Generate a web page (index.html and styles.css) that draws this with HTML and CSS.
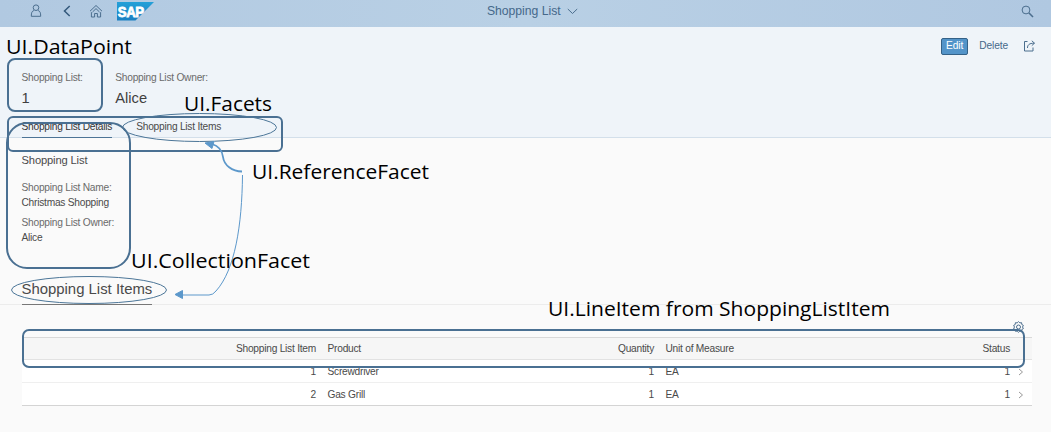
FILE: index.html
```html
<!DOCTYPE html>
<html lang="en">
<head>
<meta charset="utf-8">
<title>Shopping List</title>
<link rel="stylesheet" href="styles.css">
</head>
<body>
<div class="app">
  <header class="shell">
    <div class="shell-left">
      <svg class="icon-user" width="12" height="14" viewBox="0 0 12 14"><circle cx="6" cy="3.700" r="2.800"/><path d="M3.900 6.500C2 7.200 1.300 8.500 1.300 12.300h9.400c0-3.800-.7-5.100-2.600-5.800"/></svg>
      <svg class="icon-back" width="8" height="12" viewBox="0 0 8 12"><path d="M6.700 1 1.500 6l5.200 5"/></svg>
      <svg class="icon-home" width="14" height="14" viewBox="0 0 14 14"><path d="M1 7.200 7 1.500l6 5.700M2.400 8.200V13h3.200V9.500h2.800V13h3.200V8.200M3.500 8 7 4.600 10.500 8"/></svg>
      <svg class="logo" width="37" height="19" viewBox="0 0 37 19"><defs><linearGradient id="sap" x1="0" y1="0" x2="0" y2="1"><stop offset="0" stop-color="#24a0d8"/><stop offset="1" stop-color="#1a80c2"/></linearGradient></defs><path fill="url(#sap)" d="M0 0h37L18.500 18.500H0z"/><text x="0.800" y="15" textLength="26" lengthAdjust="spacingAndGlyphs">SAP</text></svg>
    </div>
    <div class="shell-title">Shopping List <svg width="11" height="7" viewBox="0 0 11 7"><path d="M.8 1 5.500 5.500 10.200 1"/></svg></div>
    <svg class="icon-search" width="13" height="13" viewBox="0 0 13 13"><circle cx="5" cy="5" r="3.900"/><path d="m8 8 4 4" stroke-width="1.600"/></svg>
  </header>

  <section class="object-header">
    <div class="facts">
      <div class="fact"><span class="label">Shopping List:</span><span class="value">1</span></div>
      <div class="fact"><span class="label">Shopping List Owner:</span><span class="value">Alice</span></div>
    </div>
    <div class="actions">
      <button class="edit">Edit</button>
      <button class="delete">Delete</button>
      <svg width="13" height="12" viewBox="0 0 13 12"><path d="M4.500 1.500H1.500v9.500h8.500V7.500M4.500 8c0-3 1.500-4.800 6.800-4.800M8.800.8l2.700 2.400-2.700 2.400"/></svg>
    </div>
    <nav class="anchors"><a class="active">Shopping List Details</a><a>Shopping List Items</a></nav>
  </section>

  <section class="details">
    <h3>Shopping List</h3>
    <dl>
      <dt>Shopping List Name:</dt><dd>Christmas Shopping</dd>
      <dt>Shopping List Owner:</dt><dd>Alice</dd>
    </dl>
  </section>

  <section class="items">
    <div class="items-head"><h2>Shopping List Items</h2></div>
    <div class="toolbar"><svg width="13" height="13" viewBox="0 0 13 13"><path d="m5.200 1.900 1.300-1.300 1.300 1.300 1.800-.2.200 1.800 1.600.9-.9 1.600.9 1.600-1.600.9-.2 1.800-1.800-.2-1.300 1.300-1.300-1.300-1.800.2-.2-1.800-1.600-.9.900-1.600-.9-1.600 1.600-.9.200-1.800z"/><circle cx="6.500" cy="6" r="2"/></svg></div>
    <div class="table">
      <div class="row head"><span class="num">Shopping List Item</span><span>Product</span><span class="num">Quantity</span><span>Unit of Measure</span><span class="num">Status</span><span></span></div>
      <div class="row"><span class="num">1</span><span>Screwdriver</span><span class="num">1</span><span>EA</span><span class="num">1</span><svg width="6" height="8" viewBox="0 0 6 8"><path d="m1 1 3.500 3L1 7"/></svg></div>
      <div class="row"><span class="num">2</span><span>Gas Grill</span><span class="num">1</span><span>EA</span><span class="num">1</span><svg width="6" height="8" viewBox="0 0 6 8"><path d="m1 1 3.500 3L1 7"/></svg></div>
    </div>
  </section>
</div>

<svg class="annotations" width="1059" height="432" viewBox="0 0 1059 432">
  <g class="boxes">
    <rect x="8" y="59" width="94" height="52" rx="7"/>
    <rect x="8" y="117" width="274" height="34" rx="5"/>
    <rect x="7" y="123" width="123" height="145" rx="20"/>
    <rect x="23" y="330" width="1001" height="37" rx="6"/>
  </g>
  <g class="ellipses">
    <ellipse cx="199.500" cy="127.500" rx="77" ry="14"/>
    <ellipse cx="89" cy="290" rx="77.500" ry="13.500"/>
  </g>
  <g class="arrows">
    <path class="thick" d="M242 171.500C232 171.500 224 165 223 157C222 150 219 146 212 144"/>
    <path d="M242.500 175C242 225 235 270 216 291Q213 295 209 295H182"/>
    <path class="tip" d="m205 143 9-1.500-2 7z"/>
    <path class="tip" d="m175 294.500 7.500-4v8z"/>
  </g>
  <g class="captions">
    <text x="6" y="53.500" textLength="126" lengthAdjust="spacingAndGlyphs">UI.DataPoint</text>
    <text x="184" y="110.500" textLength="88" lengthAdjust="spacingAndGlyphs">UI.Facets</text>
    <text x="252" y="179" textLength="177" lengthAdjust="spacingAndGlyphs">UI.ReferenceFacet</text>
    <text x="131" y="267.500" textLength="179" lengthAdjust="spacingAndGlyphs">UI.CollectionFacet</text>
    <text x="548" y="316" textLength="342" lengthAdjust="spacingAndGlyphs">UI.LineItem from ShoppingListItem</text>
  </g>
</svg>
</body>
</html>
```

FILE: styles.css
```css
* { box-sizing: border-box; }
body {
  margin: 0;
  background: #fff;
  color: #4a4a4a;
  font: 10.2px/14px "Liberation Sans", Arial, sans-serif;
  letter-spacing: -.24px;
  overflow: hidden;
}
svg { fill: none; stroke: #4b6e8e; stroke-width: 1; flex: none; }
h2, h3, dl, dd { margin: 0; font-weight: normal; }

.app { width: 1051px; height: 432px; background: #fafafa; }

.shell {
  display: grid;
  grid-template-columns: 1fr auto 1fr;
  align-items: center;
  height: 27px;
  padding: 0 17px 5px 30px;
  background: linear-gradient(90deg, #b1c9e1, #b9d0e5 50%, #b0c8e1);
}
.shell-left { display: flex; align-items: center; height: 22px; }
.icon-back { margin-left: 21px; stroke: #34597c; stroke-width: 1.5; }
.icon-home { margin-left: 18px; }
.logo { margin-left: 14px; margin-top: 1px; stroke: none; }
.logo text { fill: #fff; stroke: #fff; stroke-width: .8; font: bold 15.500px "Liberation Sans", Arial, sans-serif; letter-spacing: -.5px; }
.shell-title { font-size: 12.2px; letter-spacing: 0; color: #45688a; margin-left: 1px; }
.shell-title svg { margin-left: 3px; }
.icon-search { justify-self: end; }

.object-header {
  display: grid;
  grid-template-columns: 1fr auto;
  grid-template-rows: 92px 19px;
  height: 111px;
  padding: 0 15px 0 21.5px;
  background: #eff4f9;
  border-bottom: 1px solid #d3dfea;
}
.facts { display: flex; gap: 32.500px; padding-top: 44px; }
.fact { display: flex; flex-direction: column; }
.label { color: #6b6b6b; }
.value { font-size: 14.7px; letter-spacing: 0; line-height: 18px; margin-top: 4px; color: #3f3f3f; }
.actions { display: flex; align-items: center; height: 18px; margin-top: 10px; }
button { font: 10.2px/14px "Liberation Sans", Arial, sans-serif; letter-spacing: -.1px; padding: 0; border: 0; background: none; color: #45688a; }
.edit { width: 27px; height: 17px; border: 1px solid #346187; border-radius: 2px; background: #5394c9; color: #fff; }
.delete { margin: 0 15px 0 11px; }
.anchors { grid-column: 1 / 3; display: flex; gap: 24px; }
.anchors a { height: 19px; padding-top: 1px; }
.anchors .active { color: #333; border-bottom: 1px solid #4c7496; }

.details { height: 141px; padding: 15px 21.5px 0; }
.details h3 { font-size: 11.2px; letter-spacing: -.15px; line-height: 14px; }
.details dl { margin-top: 13px; line-height: 15px; }
.details dt { color: #6b6b6b; }
.details dd { margin-bottom: 5px; }

.items-head { height: 26px; padding-left: 21.5px; border-bottom: 1px solid #ececec; display: flex; }
.items-head h2 { height: 26px; font-size: 14.9px; letter-spacing: 0; line-height: 21px; border-bottom: 1px solid #777; }
.toolbar { display: flex; justify-content: flex-end; height: 32px; padding: 16px 26px 0 0; }
.table { margin: 0 19px 0 22px; }
.row {
  display: grid;
  grid-template-columns: 294px 277px 61px 264px 92px 1fr;
  align-items: center;
  height: 23px;
  padding-top: 2px;
  background: #fff;
  border-bottom: 1px solid #efefef;
}
.row span:nth-child(even) { padding-left: 11.5px; }
.row svg { margin-left: 8px; stroke: #999; }
.num { text-align: right; }
.head { padding-top: 0; background: #f6f6f6; border-top: 1px solid #d9d9d9; border-bottom-color: #e2e2e2; }
.row:last-child { border-bottom-color: #d4d4d4; }

.annotations { position: absolute; inset: 0; }
.boxes { stroke: #4a7092; stroke-width: 2; }
.ellipses { stroke: #4c7698; stroke-width: 1; }
.arrows { stroke: #5c98cb; stroke-width: 1; }
.arrows .thick { stroke-width: 1.8; }
.arrows .tip { fill: #5c98cb; }
.captions text { fill: #000; stroke: none; font: 20px "Open Sans", "Noto Sans", sans-serif; letter-spacing: 0; font-variant-ligatures: none; }
```
